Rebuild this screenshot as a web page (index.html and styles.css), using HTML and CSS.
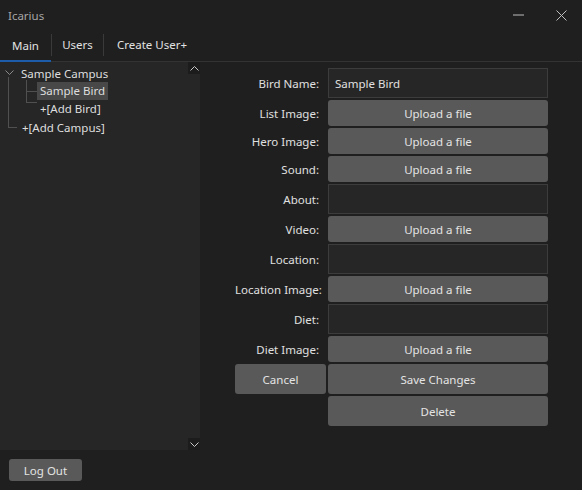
FILE: index.html
```html
<!DOCTYPE html>
<html>
<head>
<meta charset="utf-8">
<link rel="stylesheet" href="styles.css">
</head>
<body>
<div class="window">
  <div class="titlebar">
    <span class="title">Icarius</span>
    <div class="controls">
      <span class="ctl ctl-min"><svg width="11" height="2" viewBox="0 0 11 2"><line x1="0" y1="1" x2="11" y2="1" stroke="#bdbdbd" stroke-width="1"/></svg></span>
      <span class="ctl ctl-close"><svg width="11" height="11" viewBox="0 0 11 11"><path d="M0.5 0.5 L10.5 10.5 M10.5 0.5 L0.5 10.5" stroke="#bdbdbd" stroke-width="1"/></svg></span>
    </div>
  </div>
  <div class="tabs">
    <div class="tab tab-main active">Main</div>
    <div class="tab tab-users">Users</div>
    <div class="tab tab-create">Create User+</div>
  </div>
  <div class="content">
    <div class="tree">
      <div class="tree-items">
        <div class="row campus">
          <svg class="chev" width="9" height="6" viewBox="0 0 9 6"><polyline points="0.5,0.5 4.5,4.5 8.5,0.5" fill="none" stroke="#8a8a8a" stroke-width="1"/></svg>
          <span>Sample Campus</span>
        </div>
        <div class="row child bird"><span class="sel">Sample Bird</span></div>
        <div class="row child add-bird"><span>+[Add Bird]</span></div>
        <div class="row add-campus"><span>+[Add Campus]</span></div>
      </div>
      <div class="scrollbar">
        <div class="sb-btn"><svg width="9" height="5" viewBox="0 0 9 5"><polyline points="0.5,4.5 4.5,0.5 8.5,4.5" fill="none" stroke="#c8c8c8" stroke-width="1"/></svg></div>
        <div class="sb-track"></div>
        <div class="sb-btn"><svg width="9" height="5" viewBox="0 0 9 5"><polyline points="0.5,0.5 4.5,4.5 8.5,0.5" fill="none" stroke="#c8c8c8" stroke-width="1"/></svg></div>
      </div>
    </div>
    <div class="form">
      <label class="lbl">Bird Name:</label>
      <input class="field" type="text" value="Sample Bird">
      <label class="lbl">List Image:</label>
      <button class="btn">Upload a file</button>
      <label class="lbl">Hero Image:</label>
      <button class="btn">Upload a file</button>
      <label class="lbl">Sound:</label>
      <button class="btn">Upload a file</button>
      <label class="lbl">About:</label>
      <input class="field" type="text" value="">
      <label class="lbl">Video:</label>
      <button class="btn">Upload a file</button>
      <label class="lbl">Location:</label>
      <input class="field" type="text" value="">
      <label class="lbl">Location Image:</label>
      <button class="btn">Upload a file</button>
      <label class="lbl">Diet:</label>
      <input class="field" type="text" value="">
      <label class="lbl">Diet Image:</label>
      <button class="btn">Upload a file</button>
      <button class="btn tall">Cancel</button>
      <button class="btn tall">Save Changes</button>
      <span></span>
      <button class="btn tall">Delete</button>
    </div>
  </div>
  <div class="footer">
    <button class="btn logout">Log Out</button>
  </div>
</div>
</body>
</html>
```
FILE: styles.css
```css
* { box-sizing: border-box; }
html, body { margin: 0; padding: 0; }
body {
  background: #1f1f1f;
  font-family: "Noto Sans", "Open Sans", sans-serif;
  font-size: 11.5px;
  color: #dedede;
}
.window {
  width: 582px;
  height: 490px;
  display: flex;
  flex-direction: column;
}
.titlebar {
  height: 30px;
  display: flex;
  align-items: center;
  padding-left: 8px;
}
.title { color: #a6a6a6; }
.controls { margin-left: auto; display: flex; height: 100%; }
.ctl { display: flex; align-items: center; justify-content: center; height: 100%; }
.ctl-min { width: 44px; }
.ctl-close { width: 42px; }
.tabs {
  height: 32px;
  display: flex;
  border-bottom: 1px solid #333333;
}
.tab {
  display: flex;
  align-items: center;
  justify-content: center;
  padding-bottom: 2px;
  position: relative;
  color: #e2e2e2;
  white-space: nowrap;
}
.tab-main { width: 51px; }
.tab-users { width: 51px; }
.tab-create { width: 96px; }
.tab + .tab { margin-left: 1px; }
.tab + .tab::before {
  content: "";
  position: absolute;
  left: -1px;
  top: 4px;
  height: 22px;
  border-left: 1px solid #3a3a3a;
}
.tab.active {
  border-bottom: 2px solid #1c5ca8;
  margin-bottom: -1px;
  padding-bottom: 0;
}
.content {
  display: flex;
  height: 388px;
}
.tree {
  width: 200px;
  background: #262626;
  display: flex;
}
.tree-items {
  flex: 1;
  padding-top: 2px;
}
.row {
  height: 18px;
  display: flex;
  align-items: center;
  position: relative;
  white-space: nowrap;
}
.campus { padding-left: 5px; }
.campus .chev { margin-right: 7px; }
.child { padding-left: 37px; }
.child span { padding: 0 3px; height: 18px; line-height: 18px; }
.sel { background: #484848; }
.add-bird span { padding-left: 3px; }
.add-campus { padding-left: 22px; }
.bird::before, .add-bird::before, .add-campus::before {
  content: "";
  position: absolute;
  border-left: 1px solid #505050;
  border-bottom: 1px solid #505050;
}
.bird::before { left: 26px; top: -2px; width: 10px; height: 11px; }
.add-bird::before { left: 26px; top: -8px; width: 10px; height: 10px; }
.add-campus::before { left: 8px; top: -41px; width: 8px; height: 50px; }
.scrollbar {
  width: 12px;
  display: flex;
  flex-direction: column;
}
.sb-btn {
  height: 12px;
  background: #1c1c1c;
  display: flex;
  align-items: center;
  justify-content: center;
}
.sb-track { flex: 1; }
.form {
  margin: 6px 0 0 35px;
  display: grid;
  grid-template-columns: 91px 220px;
  grid-auto-rows: min-content;
  gap: 2px;
  align-content: start;
}
.lbl {
  text-align: right;
  padding-right: 7px;
  align-self: center;
  color: #e0e0e0;
  white-space: nowrap;
}
.field {
  height: 30px;
  background: #262626;
  border: 1px solid #3c3c3c;
  color: #e0e0e0;
  font: inherit;
  padding: 0 6px;
  outline: none;
}
.btn {
  height: 26px;
  background: #595959;
  border: none;
  border-radius: 3px;
  color: #e4e4e4;
  font: inherit;
  padding: 0;
}
.btn.tall { height: 30px; }
.footer {
  flex: 1;
  padding: 9px 0 0 9px;
}
.logout {
  width: 73px;
  height: 22px;
}
```
